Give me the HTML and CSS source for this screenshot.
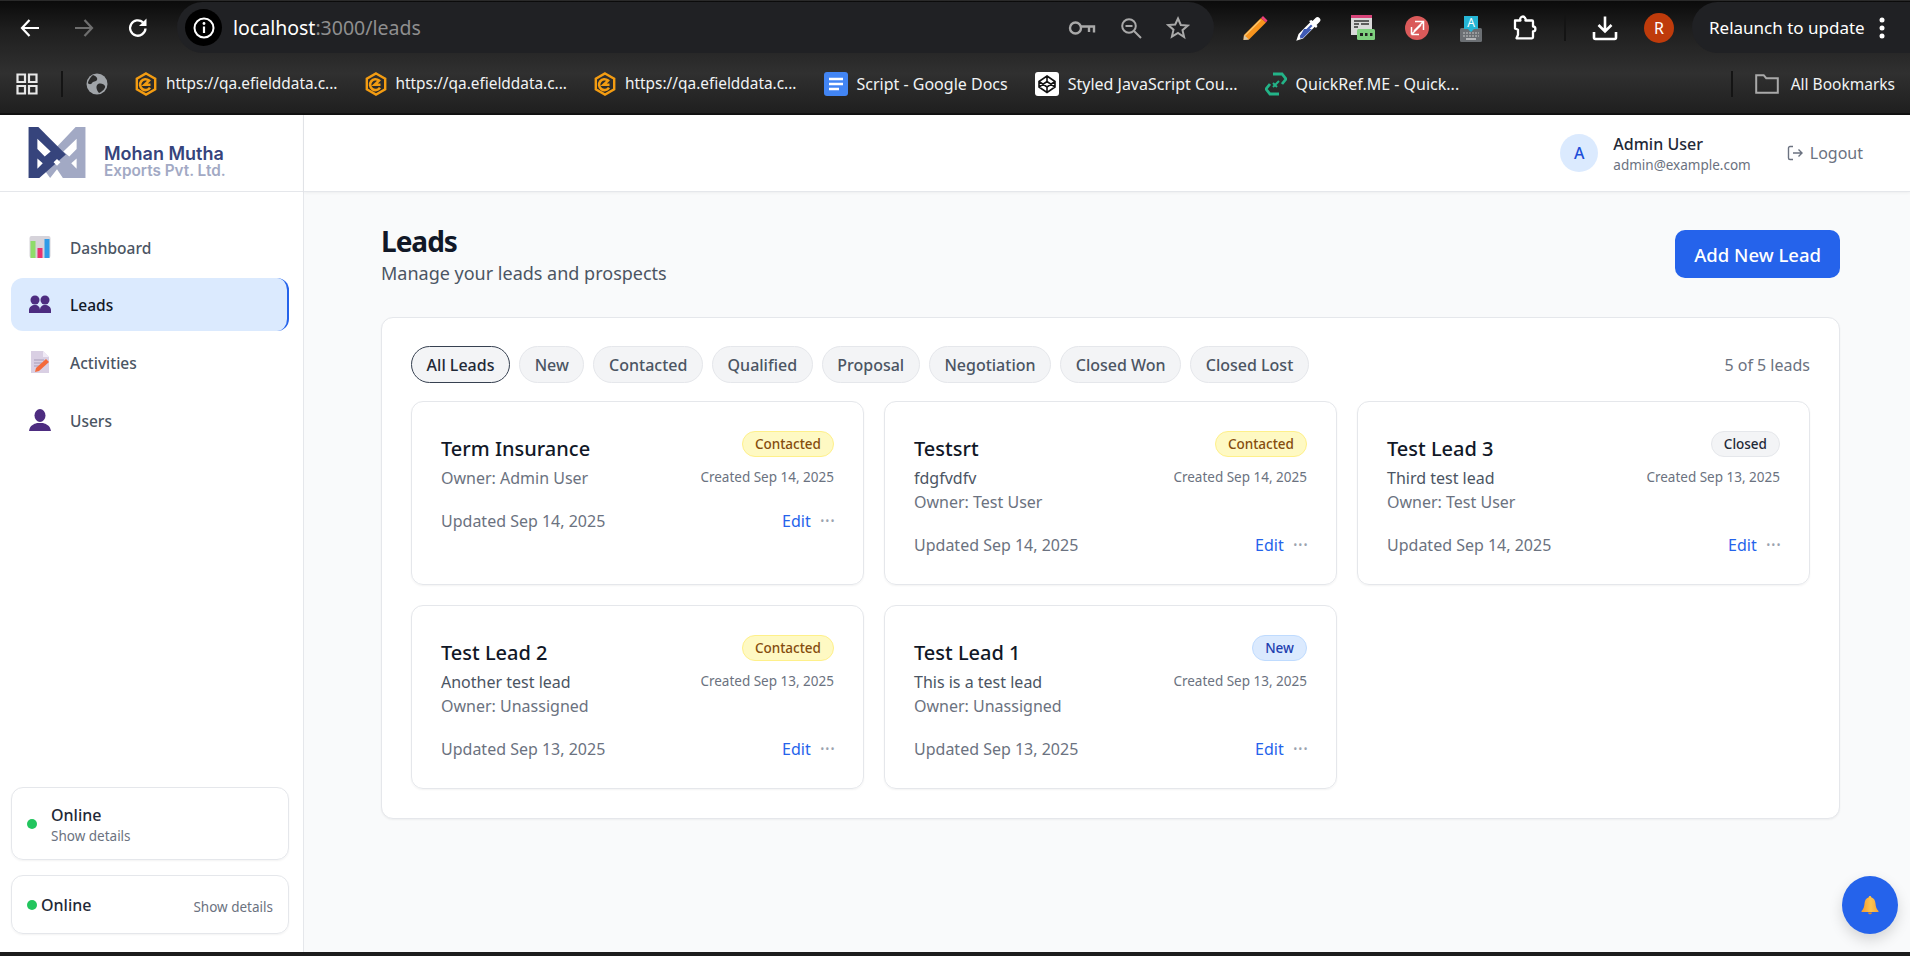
FILE: index.html
```html
<!DOCTYPE html>
<html lang="en">
<head>
    <meta charset="UTF-8">
    <title>Leads</title>
    <link rel="stylesheet" href="styles.css">
</head>
<body>
    <svg class="defs" width="0" height="0">
        <symbol id="efd" viewBox="0 0 22 24">
            <path d="M11 1.500 20.200 6.700V17.300L11 22.500 1.800 17.300V6.700Z" fill="none" stroke="#f39c12" stroke-width="2.400"/>
            <path d="M15.500 12.800H9.600L14 8.600A5.400 5.400 0 1 0 15 15.600" fill="none" stroke="#f39c12" stroke-width="2.600"/>
        </symbol>
    </svg>

    <header class="chrome">
        <div class="toolbar">
            <div class="tb-btn">
                <svg width="22" height="22" viewBox="0 0 22 22"><path d="M20 11H3M10.500 3 3 11l7.500 8" fill="none" stroke="#fff" stroke-width="2.200"/></svg>
            </div>
            <div class="tb-btn">
                <svg width="22" height="22" viewBox="0 0 22 22"><path d="M2 11h17M11.500 3 19 11l-7.500 8" fill="none" stroke="#6e6e6e" stroke-width="2.200"/></svg>
            </div>
            <div class="tb-btn">
                <svg width="22" height="22" viewBox="0 0 22 22"><path d="M18.500 11.500A7.700 7.700 0 1 1 16 5.300" fill="none" stroke="#fff" stroke-width="2.300"/><path d="M19.500 1.500v7.500H12z" fill="#fff"/></svg>
            </div>
            <div class="omnibox">
                <div class="site-info">
                    <svg width="22" height="22" viewBox="0 0 22 22"><circle cx="11" cy="11" r="9.500" fill="none" stroke="#fff" stroke-width="2"/><path d="M11 9.500v6.500" stroke="#fff" stroke-width="2.200"/><circle cx="11" cy="6.500" r="1.400" fill="#fff"/></svg>
                </div>
                <div class="url">localhost<span class="url-dim">:3000/leads</span></div>
                <div class="omni-icons">
                    <svg width="28" height="18" viewBox="0 0 28 18"><circle cx="7.500" cy="9" r="5.500" fill="none" stroke="#a9a9a9" stroke-width="2.400"/><path d="M13 7.500h13v6M21 8v5" fill="none" stroke="#a9a9a9" stroke-width="2.400"/></svg>
                    <svg width="24" height="24" viewBox="0 0 24 24"><circle cx="10" cy="10" r="6.800" fill="none" stroke="#a9a9a9" stroke-width="2"/><path d="M6.500 10h7M15 15l7 7" fill="none" stroke="#a9a9a9" stroke-width="2"/></svg>
                    <svg width="24" height="24" viewBox="0 0 24 24"><path d="M12 2.500l2.800 6.500 7 .6-5.300 4.600 1.600 6.900L12 17l-6.100 3.600 1.600-6.900-5.300-4.600 7-.6z" fill="none" stroke="#a9a9a9" stroke-width="2"/></svg>
                </div>
            </div>
            <div class="tb-ext">
                <svg width="28" height="28" viewBox="0 0 28 28"><path d="M3 21 20 4l5 4.500L8 25.500 2.500 26z" fill="#f7941d"/><path d="M20 4l2-2 4.500 4.500-1.500 2z" fill="#ec407a"/><path d="M4 21.500 19.500 6" stroke="#fbc56d" stroke-width="1.500"/><path d="M2.500 26l.5-5 5 4.500z" fill="#d8c7a8"/></svg>
            </div>
            <div class="tb-ext">
                <svg width="26" height="26" viewBox="0 0 26 26"><path d="M15 8 3.500 19.500 2 24l4.500-1.500L18 11z" fill="#3f5bb5" stroke="#fff" stroke-width="2.200"/><path d="M8 14h8L7 23l-3 .5.500-3z" fill="#3f5bb5"/><path d="M13 6l7 7 1.500-2-1-1 3-3a2.800 2.800 0 0 0-4-4l-3 3-1-1z" fill="#fff"/></svg>
            </div>
            <div class="tb-ext">
                <svg width="24" height="26" viewBox="0 0 24 26"><rect x="0" y="0" width="21" height="20" fill="#d9d9d9"/><rect x="0" y="0" width="21" height="3" fill="#d8457a"/><path d="M3 6h15M3 9h5M10 9h8M3 12h4" stroke="#333" stroke-width="1.500"/><rect x="6" y="14" width="18" height="11" rx="1.500" fill="#7ed07e"/><path d="M9 19.500h3M14 19.500h2.500M19 19.500h2.500" stroke="#222" stroke-width="3"/></svg>
            </div>
            <div class="tb-ext">
                <svg width="24" height="24" viewBox="0 0 24 24"><circle cx="12" cy="12" r="12" fill="#da5a5a"/><path d="M6.500 18.500V11M6.500 18.500H14M6.500 18.500 16 9M10 5.500h8.500V14M18.500 5.500 9 15" fill="none" stroke="#fff" stroke-width="1.500"/></svg>
            </div>
            <div class="tb-ext">
                <svg width="24" height="30" viewBox="0 -3 24 30"><rect x="1" y="12" width="22" height="14" rx="1.500" fill="#6b6f73"/><path d="M4 17h16M4 20h16" stroke="#a6a9ab" stroke-width="1.500" stroke-dasharray="2 1"/><path d="M7 23h10" stroke="#cfd1d2" stroke-width="1.500"/><path d="M5 0h14v13l-4 0-3 3-3-3-4 0z" fill="#26b6d6"/><text class="ext-letter" x="12" y="11">A</text></svg>
            </div>
            <div class="tb-ext">
                <svg width="24" height="26" viewBox="0 0 24 26"><path d="M2 5.500h5.500a2.500 2.500 0 0 1 4.500-2.500 2.500 2.500 0 0 1 .5 2.500H19a1 1 0 0 1 1 1v5a2.300 2.300 0 0 1 0 4.800v6a1 1 0 0 1-1 1H3.500l1.500-3.500v-5L2 13.500z" fill="none" stroke="#fff" stroke-width="2.300" stroke-linejoin="round"/></svg>
            </div>
            <div class="tb-sep"><span class="sep-line"></span></div>
            <div class="tb-btn">
                <svg width="26" height="26" viewBox="0 0 26 26"><path d="M13 1.500V16M6.500 10l6.500 6.500 6.500-6.500" fill="none" stroke="#fff" stroke-width="2.600"/><path d="M2 17v5.500a1.500 1.500 0 0 0 1.500 1.500h19a1.500 1.500 0 0 0 1.500-1.500V17" fill="none" stroke="#fff" stroke-width="2.600"/></svg>
            </div>
            <div class="tb-btn"><div class="profile">R</div></div>
            <div class="relaunch">
                <span>Relaunch to update</span>
                <svg width="6" height="24" viewBox="0 0 6 24"><circle cx="3" cy="4" r="2.500" fill="#fff"/><circle cx="3" cy="12" r="2.500" fill="#fff"/><circle cx="3" cy="20" r="2.500" fill="#fff"/></svg>
            </div>
        </div>

        <div class="bookmarks">
            <svg class="bm-apps" width="22" height="22" viewBox="0 0 22 22"><path d="M1.500 1.500h7.500v7.500H1.500zM13 1.500h7.500v7.500H13zM1.500 13h7.500v7.500H1.500zM13 13h7.500v7.500H13z" fill="none" stroke="#e8e8e8" stroke-width="2.200"/></svg>
            <span class="sep-line bm-sep"></span>
            <svg class="bm-globe" width="22" height="22" viewBox="0 0 22 22"><circle cx="11" cy="11" r="10.500" fill="#a0a4a8"/><path d="M7 2c3 1 5 3 4 5s-4 1-5 3-4 1-4 0 2-6 5-8zM12 11c3-1 6 0 7 2s-3 6-6 7c-2-2-4-7-1-9z" fill="#2a2a2a"/></svg>
            <div class="bm bm-url">
                <svg width="22" height="24"><use href="#efd"/></svg>
                <span>https://qa.efielddata.c...</span>
            </div>
            <div class="bm bm-url">
                <svg width="22" height="24"><use href="#efd"/></svg>
                <span>https://qa.efielddata.c...</span>
            </div>
            <div class="bm bm-url">
                <svg width="22" height="24"><use href="#efd"/></svg>
                <span>https://qa.efielddata.c...</span>
            </div>
            <div class="bm">
                <svg width="24" height="24" viewBox="0 0 24 24"><rect width="24" height="24" rx="3" fill="#4285f4"/><path d="M5 7h14M5 12h14M5 17h10" stroke="#fff" stroke-width="2.600"/></svg>
                <span>Script - Google Docs</span>
            </div>
            <div class="bm">
                <svg width="24" height="24" viewBox="0 0 24 24"><rect width="24" height="24" rx="3" fill="#fff"/><path d="M12 4 20 9.500v5.500L12 20.500 4 15V9.500zM12 4v5M12 15.500v5M4 9.500 12 15l8-5.500M4 15l8-5.500 8 5.500" fill="none" stroke="#111" stroke-width="1.600"/></svg>
                <span>Styled JavaScript Cou...</span>
            </div>
            <div class="bm">
                <svg width="22" height="24" viewBox="0 0 22 24"><path d="M8 2H17L21 7 17 12M14 22H5L1 17 5 12" fill="none" stroke="#23b488" stroke-width="2.800"/><path d="M8 15l6-6M8 11l4 4" stroke="#23b488" stroke-width="2"/></svg>
                <span>QuickRef.ME - Quick...</span>
            </div>
            <span class="sep-line bm-sep bm-sep-right"></span>
            <div class="bm bm-all">
                <svg width="24" height="20" viewBox="0 0 24 20"><path d="M1.200 18.800V1.200h7.500l2.500 3h11.600v14.600z" fill="none" stroke="#a9a9a9" stroke-width="2"/></svg>
                <span>All Bookmarks</span>
            </div>
        </div>
    </header>

    <div class="app">
        <aside class="sidebar">
            <div class="brand">
                <svg class="brand-mark" width="58" height="53" viewBox="4 4 58 54">
                    <path d="M62 5H52L16 43 26 57 33 48 39 57H62Z" fill="#a2a9c4"/>
                    <path d="M4 5H14L42 33 15 57H4Z" fill="#36447c"/>
                    <path d="M13 17 26.500 30 20.500 35 13 27.500ZM13 37 18.500 42 13 47.500Z" fill="#fff"/>
                    <path d="M53 17 39.500 30 45.500 35 53 27.500ZM53 37 47.500 42 53 47.500ZM29.500 41 33 37.500 36.500 41 33 44.500Z" fill="#fff"/>
                </svg>
                <div class="brand-text">
                    <div class="brand-name">Mohan Mutha</div>
                    <div class="brand-sub">Exports Pvt. Ltd.</div>
                </div>
            </div>
            <nav class="nav">
                <a class="nav-item">
                    <svg width="21" height="22" viewBox="0 0 21 22"><rect width="21" height="22" rx="2" fill="#d6d3da"/><rect x="1" y="5" width="5" height="17" fill="#8fdc6a"/><rect x="8" y="12" width="5" height="10" fill="#e8336f"/><rect x="15" y="3" width="5" height="19" fill="#2f9be8"/></svg>
                    <span>Dashboard</span>
                </a>
                <a class="nav-item nav-active">
                    <svg width="22" height="18" viewBox="0 0 22 18"><g fill="#4d2c80"><circle cx="6" cy="5" r="4.500"/><circle cx="16" cy="5" r="4.500"/><path d="M0 18v-3c0-3 3-5 6-5s5 2 5 5c0-3 2-5 5-5s6 2 6 5v3z"/></g></svg>
                    <span>Leads</span>
                </a>
                <a class="nav-item">
                    <svg width="20" height="22" viewBox="0 0 20 22"><path d="M1 0h12l6 6v16H1z" fill="#d9cfe3"/><path d="M13 0l6 6h-6z" fill="#efe9f5"/><path d="M4 9h10M4 12h8M4 15h5" stroke="#a89bb8" stroke-width="1.200"/><path d="M5 21l1-4 10-9 3 3-10 9z" fill="#f4693a"/></svg>
                    <span>Activities</span>
                </a>
                <a class="nav-item">
                    <svg width="22" height="22" viewBox="0 0 22 22"><g fill="#4d2c80"><ellipse cx="11" cy="6.500" rx="5.500" ry="6.500"/><path d="M0 22c1-6 5-7 8-8h6c3 1 7 2 8 8z"/></g></svg>
                    <span>Users</span>
                </a>
            </nav>
            <div class="status status-stack">
                <span class="dot"></span>
                <div class="status-lines">
                    <div class="status-title">Online</div>
                    <div class="status-more">Show details</div>
                </div>
            </div>
            <div class="status status-row">
                <span class="dot"></span>
                <div class="status-title">Online</div>
                <div class="status-more status-right">Show details</div>
            </div>
        </aside>

        <div class="content">
            <div class="topbar">
                <div class="avatar">A</div>
                <div class="user">
                    <div class="user-name">Admin User</div>
                    <div class="user-mail">admin@example.com</div>
                </div>
                <div class="logout">
                    <svg width="16" height="16" viewBox="0 0 16 16"><path d="M6 1.500H3a1.500 1.500 0 0 0-1.500 1.500v10A1.500 1.500 0 0 0 3 14.500h3M6 8h9M11.500 4.500 15 8l-3.500 3.500" fill="none" stroke="#6b7280" stroke-width="1.400"/></svg>
                    <span>Logout</span>
                </div>
            </div>

            <main class="main">
                <div class="page-head">
                    <div>
                        <h1>Leads</h1>
                        <p class="page-sub">Manage your leads and prospects</p>
                    </div>
                    <button class="add-btn">Add New Lead</button>
                </div>

                <section class="panel">
                    <div class="filters">
                        <div class="chips">
                            <span class="chip chip-on">All Leads</span>
                            <span class="chip">New</span>
                            <span class="chip">Contacted</span>
                            <span class="chip">Qualified</span>
                            <span class="chip">Proposal</span>
                            <span class="chip">Negotiation</span>
                            <span class="chip">Closed Won</span>
                            <span class="chip">Closed Lost</span>
                        </div>
                        <div class="count">5 of 5 leads</div>
                    </div>

                    <div class="cards">
                        <article class="card">
                            <div class="card-top">
                                <div>
                                    <h3>Term Insurance</h3>
                                    <div class="line">Owner: Admin User</div>
                                </div>
                                <div class="card-side">
                                    <span class="badge badge-contacted">Contacted</span>
                                    <div class="created">Created Sep 14, 2025</div>
                                </div>
                            </div>
                            <div class="card-foot">
                                <span class="line">Updated Sep 14, 2025</span>
                                <span class="actions"><span class="edit">Edit</span><span class="more">···</span></span>
                            </div>
                        </article>
                        <article class="card">
                            <div class="card-top">
                                <div>
                                    <h3>Testsrt</h3>
                                    <div class="line line-desc">fdgfvdfv</div>
                                    <div class="line">Owner: Test User</div>
                                </div>
                                <div class="card-side">
                                    <span class="badge badge-contacted">Contacted</span>
                                    <div class="created">Created Sep 14, 2025</div>
                                </div>
                            </div>
                            <div class="card-foot">
                                <span class="line">Updated Sep 14, 2025</span>
                                <span class="actions"><span class="edit">Edit</span><span class="more">···</span></span>
                            </div>
                        </article>
                        <article class="card">
                            <div class="card-top">
                                <div>
                                    <h3>Test Lead 3</h3>
                                    <div class="line line-desc">Third test lead</div>
                                    <div class="line">Owner: Test User</div>
                                </div>
                                <div class="card-side">
                                    <span class="badge badge-closed">Closed</span>
                                    <div class="created">Created Sep 13, 2025</div>
                                </div>
                            </div>
                            <div class="card-foot">
                                <span class="line">Updated Sep 14, 2025</span>
                                <span class="actions"><span class="edit">Edit</span><span class="more">···</span></span>
                            </div>
                        </article>
                        <article class="card">
                            <div class="card-top">
                                <div>
                                    <h3>Test Lead 2</h3>
                                    <div class="line line-desc">Another test lead</div>
                                    <div class="line">Owner: Unassigned</div>
                                </div>
                                <div class="card-side">
                                    <span class="badge badge-contacted">Contacted</span>
                                    <div class="created">Created Sep 13, 2025</div>
                                </div>
                            </div>
                            <div class="card-foot">
                                <span class="line">Updated Sep 13, 2025</span>
                                <span class="actions"><span class="edit">Edit</span><span class="more">···</span></span>
                            </div>
                        </article>
                        <article class="card">
                            <div class="card-top">
                                <div>
                                    <h3>Test Lead 1</h3>
                                    <div class="line line-desc">This is a test lead</div>
                                    <div class="line">Owner: Unassigned</div>
                                </div>
                                <div class="card-side">
                                    <span class="badge badge-new">New</span>
                                    <div class="created">Created Sep 13, 2025</div>
                                </div>
                            </div>
                            <div class="card-foot">
                                <span class="line">Updated Sep 13, 2025</span>
                                <span class="actions"><span class="edit">Edit</span><span class="more">···</span></span>
                            </div>
                        </article>
                    </div>
                </section>
            </main>
        </div>

        <button class="bell">
            <svg width="20" height="20" viewBox="0 0 20 20">
                <defs><linearGradient id="bellfill" x1="0" x2="1" y1="0" y2="0"><stop offset="0" stop-color="#f59a2e"/><stop offset=".55" stop-color="#fdc44f"/><stop offset="1" stop-color="#f2a33a"/></linearGradient></defs>
                <path d="M10 1c.8 0 1.200.5 1.200 1.200C14 3 15.300 5.500 15.500 8.500c.2 3.500 1 5.500 3 7.500v1h-17v-1c2-2 2.800-4 3-7.500C4.700 5.500 6 3 8.800 2.200 8.800 1.500 9.200 1 10 1z" fill="url(#bellfill)"/>
                <path d="M8 17.500h4c0 1-1 1.800-2 1.800s-2-.8-2-1.800z" fill="#e58a25"/>
            </svg>
        </button>
    </div>
    <div class="screen-edge"></div>
</body>
</html>
```

FILE: styles.css
```css
* {
    box-sizing: border-box;
}
html, body {
    height: 100%;
}
body {
    margin: 0;
    height: 956px;
    overflow: hidden;
    display: flex;
    flex-direction: column;
    font-family: "Noto Sans", "Open Sans", sans-serif;
    background-color: #f9fafb;
    color: #111827;
}
.defs {
    position: absolute;
}

/* browser bars */
.chrome {
    height: 115px;
    flex: none;
    color: #f1f3f4;
    background: linear-gradient(#0b0b0b 0, #1f1f1f 30px, #303030 72px, #1f1f1f 112px);
    border-top: 1px solid #2a2a2a;
    border-bottom: 2px solid #111;
}
.toolbar {
    height: 53px;
    display: flex;
    align-items: center;
    padding-left: 3px;
}
.tb-btn, .tb-ext {
    width: 54px;
    height: 50px;
    flex: none;
    display: flex;
    align-items: center;
    justify-content: center;
}
.omnibox {
    width: 1037px;
    height: 51px;
    margin-left: 12px;
    margin-right: 14px;
    flex: none;
    display: flex;
    align-items: center;
    padding-left: 8px;
    background-color: #202124;
    border-radius: 26px;
}
.site-info {
    width: 37px;
    height: 37px;
    border-radius: 50%;
    background-color: #000;
    display: flex;
    align-items: center;
    justify-content: center;
}
.url {
    margin-left: 11px;
    font-size: 19.500px;
    color: #fff;
}
.url-dim {
    color: #8f8f8f;
}
.omni-icons {
    margin-left: auto;
    margin-right: 24px;
    display: flex;
    align-items: center;
    gap: 23px;
}
.ext-letter {
    font-family: "Noto Sans", sans-serif;
    font-size: 12px;
    fill: #fff;
    text-anchor: middle;
}
.tb-sep {
    width: 26px;
    height: 26px;
    flex: none;
    display: flex;
    justify-content: center;
}
.sep-line {
    display: block;
    width: 2px;
    background-color: #141414;
}
.profile {
    width: 30px;
    height: 30px;
    border-radius: 50%;
    background-color: #bf3b0b;
    color: #fff;
    font-size: 16px;
    display: flex;
    align-items: center;
    justify-content: center;
}
.relaunch {
    margin-left: 6px;
    flex: 1;
    height: 51px;
    display: flex;
    align-items: center;
    gap: 14px;
    padding-left: 17px;
    background-color: #202124;
    border-radius: 26px 0 0 26px;
    font-size: 17px;
    color: #fff;
    white-space: nowrap;
}
.bookmarks {
    height: 59px;
    display: flex;
    align-items: center;
    padding-left: 16px;
    font-size: 16px;
}
.bm-sep {
    height: 26px;
    margin-left: 23px;
}
.bm-globe {
    margin-left: 23px;
}
.bm {
    margin-left: 27px;
    display: flex;
    align-items: center;
    gap: 9px;
    white-space: nowrap;
}
.bm-url {
    font-size: 15.400px;
}
.bm-sep-right {
    margin-left: auto;
}
.bm-all {
    margin-left: 22px;
    margin-right: 15px;
    gap: 12px;
    font-size: 15.500px;
}

/* app shell */
.app {
    flex: 1;
    min-height: 0;
    display: flex;
    position: relative;
}
.screen-edge {
    height: 4px;
    flex: none;
    background-color: #1c1c1c;
}
.sidebar {
    width: 304px;
    flex: none;
    display: flex;
    flex-direction: column;
    background-color: #fff;
    border-right: 1px solid #e5e7eb;
    padding-bottom: 18px;
}
.brand {
    height: 77px;
    flex: none;
    display: flex;
    align-items: flex-start;
    padding: 11px 0 0 28px;
    border-bottom: 1px solid #e5e7eb;
}
.brand-text {
    margin: 18px 0 0 18px;
    font-family: "Inter", sans-serif;
    font-weight: 600;
}
.brand-name {
    font-size: 18px;
    line-height: 20px;
    color: #36447c;
}
.brand-sub {
    font-size: 15.300px;
    line-height: 14px;
    color: #a2a9c4;
}
.nav {
    flex: 1;
    padding: 28px 14px 0 11px;
    display: flex;
    flex-direction: column;
    gap: 4.700px;
}
.nav-item {
    height: 53px;
    display: flex;
    align-items: center;
    gap: 19px;
    padding-left: 18px;
    font-size: 15.500px;
    font-weight: 500;
    color: #4b5563;
    border-radius: 12px;
}
.nav-item span {
    padding-top: 2px;
}
.nav-item svg {
    width: 22px;
    flex: none;
}
.nav-active {
    background-color: #dbeafe;
    color: #111827;
    border-right: 2px solid #2563eb;
}
.status {
    margin: 0 14px 15px 11px;
    border: 1px solid #e5e7eb;
    border-radius: 12px;
    box-shadow: 0 1px 2px rgba(0, 0, 0, 0.05);
    display: flex;
    align-items: center;
}
.status:last-child {
    margin-bottom: 0;
}
.dot {
    width: 10px;
    height: 10px;
    flex: none;
    border-radius: 50%;
    background-color: #22c55e;
}
.status-title {
    font-size: 16px;
    font-weight: 500;
    line-height: 24px;
    color: #1f2937;
}
.status-more {
    font-size: 13.500px;
    line-height: 18px;
    color: #6b7280;
}
.status-stack {
    height: 73px;
    padding-left: 15px;
    gap: 14px;
}
.status-row {
    height: 59px;
    padding: 0 15px;
    gap: 4px;
}
.status-right {
    margin-left: auto;
    padding-top: 4px;
}

.content {
    flex: 1;
    min-width: 0;
    display: flex;
    flex-direction: column;
}
.topbar {
    height: 77px;
    flex: none;
    display: flex;
    align-items: center;
    justify-content: flex-end;
    padding-right: 47px;
    background-color: #fff;
    border-bottom: 1px solid #e5e7eb;
    box-shadow: 0 1px 3px rgba(0, 0, 0, 0.05);
}
.avatar {
    width: 38px;
    height: 38px;
    border-radius: 50%;
    background-color: #dbeafe;
    color: #1d4ed8;
    font-size: 16px;
    font-weight: 500;
    display: flex;
    align-items: center;
    justify-content: center;
}
.user {
    margin-left: 15px;
}
.user-name {
    padding-top: 1px;
    font-size: 16px;
    font-weight: 500;
    line-height: 22px;
    color: #1f2937;
}
.user-mail {
    font-size: 13.500px;
    line-height: 20px;
    color: #6b7280;
}
.logout {
    margin-left: 36px;
    display: flex;
    align-items: center;
    gap: 7px;
    font-size: 16px;
    color: #6b7280;
}

.main {
    flex: 1;
    padding: 32px 70px 0 77px;
}
.page-head {
    display: flex;
    justify-content: space-between;
    align-items: flex-start;
}
h1 {
    margin: 0;
    font-size: 28px;
    font-weight: 700;
    line-height: 35px;
    letter-spacing: -1px;
}
.page-sub {
    margin: 0;
    font-size: 18px;
    line-height: 28px;
    color: #4b5563;
}
.add-btn {
    margin-top: 6px;
    height: 48px;
    padding: 0 19px;
    border: none;
    border-radius: 10px;
    background-color: #2563eb;
    color: #fff;
    font-family: inherit;
    font-size: 18.500px;
    font-weight: 500;
}
.panel {
    margin-top: 30px;
    padding: 28px 29px 29px;
    background-color: #fff;
    border: 1px solid #e5e7eb;
    border-radius: 12px;
    box-shadow: 0 1px 2px rgba(0, 0, 0, 0.05);
}
.filters {
    display: flex;
    justify-content: space-between;
    align-items: center;
}
.chips {
    display: flex;
    gap: 9px;
}
.chip {
    height: 37px;
    padding: 0 14.600px;
    display: flex;
    align-items: center;
    border: 1px solid #e5e7eb;
    border-radius: 19px;
    background-color: #f3f4f6;
    font-size: 16px;
    font-weight: 500;
    color: #4b5563;
}
.chip-on {
    border-color: #374151;
    color: #1f2937;
}
.count {
    font-size: 16px;
    color: #6b7280;
}
.cards {
    margin-top: 18px;
    display: grid;
    grid-template-columns: repeat(3, 1fr);
    grid-auto-rows: 184px;
    gap: 20px;
}
.card {
    padding: 29px;
    border: 1px solid #e5e7eb;
    border-radius: 12px;
    box-shadow: 0 1px 2px rgba(0, 0, 0, 0.05);
}
.card-top {
    display: flex;
    justify-content: space-between;
    align-items: flex-start;
}
h3 {
    margin: 4px 0 3px;
    font-size: 20px;
    font-weight: 500;
    line-height: 28px;
}
.line {
    font-size: 16px;
    line-height: 24px;
    color: #6b7280;
}
.line-desc {
    color: #4b5563;
}
.card-side {
    display: flex;
    flex-direction: column;
    align-items: flex-end;
}
.badge {
    height: 26px;
    padding: 0 12px;
    display: flex;
    align-items: center;
    border: 1px solid;
    border-radius: 13px;
    font-size: 13.500px;
    font-weight: 500;
}
.badge-contacted {
    background-color: #fef9c3;
    border-color: #fef08a;
    color: #854d0e;
}
.badge-closed {
    background-color: #f3f4f6;
    border-color: #e5e7eb;
    color: #1f2937;
}
.badge-new {
    background-color: #dbeafe;
    border-color: #bfdbfe;
    color: #1e40af;
}
.created {
    margin-top: 10px;
    font-size: 13.500px;
    line-height: 20px;
    color: #6b7280;
}
.card-foot {
    margin-top: 19px;
    display: flex;
    justify-content: space-between;
    align-items: center;
}
.actions {
    display: flex;
    align-items: center;
    gap: 9px;
    font-size: 16px;
    line-height: 24px;
}
.edit {
    color: #2563eb;
}
.more {
    margin-right: -1px;
    font-size: 19px;
    color: #9ca3af;
}
.bell {
    position: absolute;
    right: 12px;
    bottom: 18px;
    width: 56px;
    height: 58px;
    padding: 0;
    border: none;
    border-radius: 50%;
    background-color: #2563eb;
    box-shadow: 0 6px 14px rgba(0, 0, 0, 0.15);
    display: flex;
    align-items: center;
    justify-content: center;
}
```
